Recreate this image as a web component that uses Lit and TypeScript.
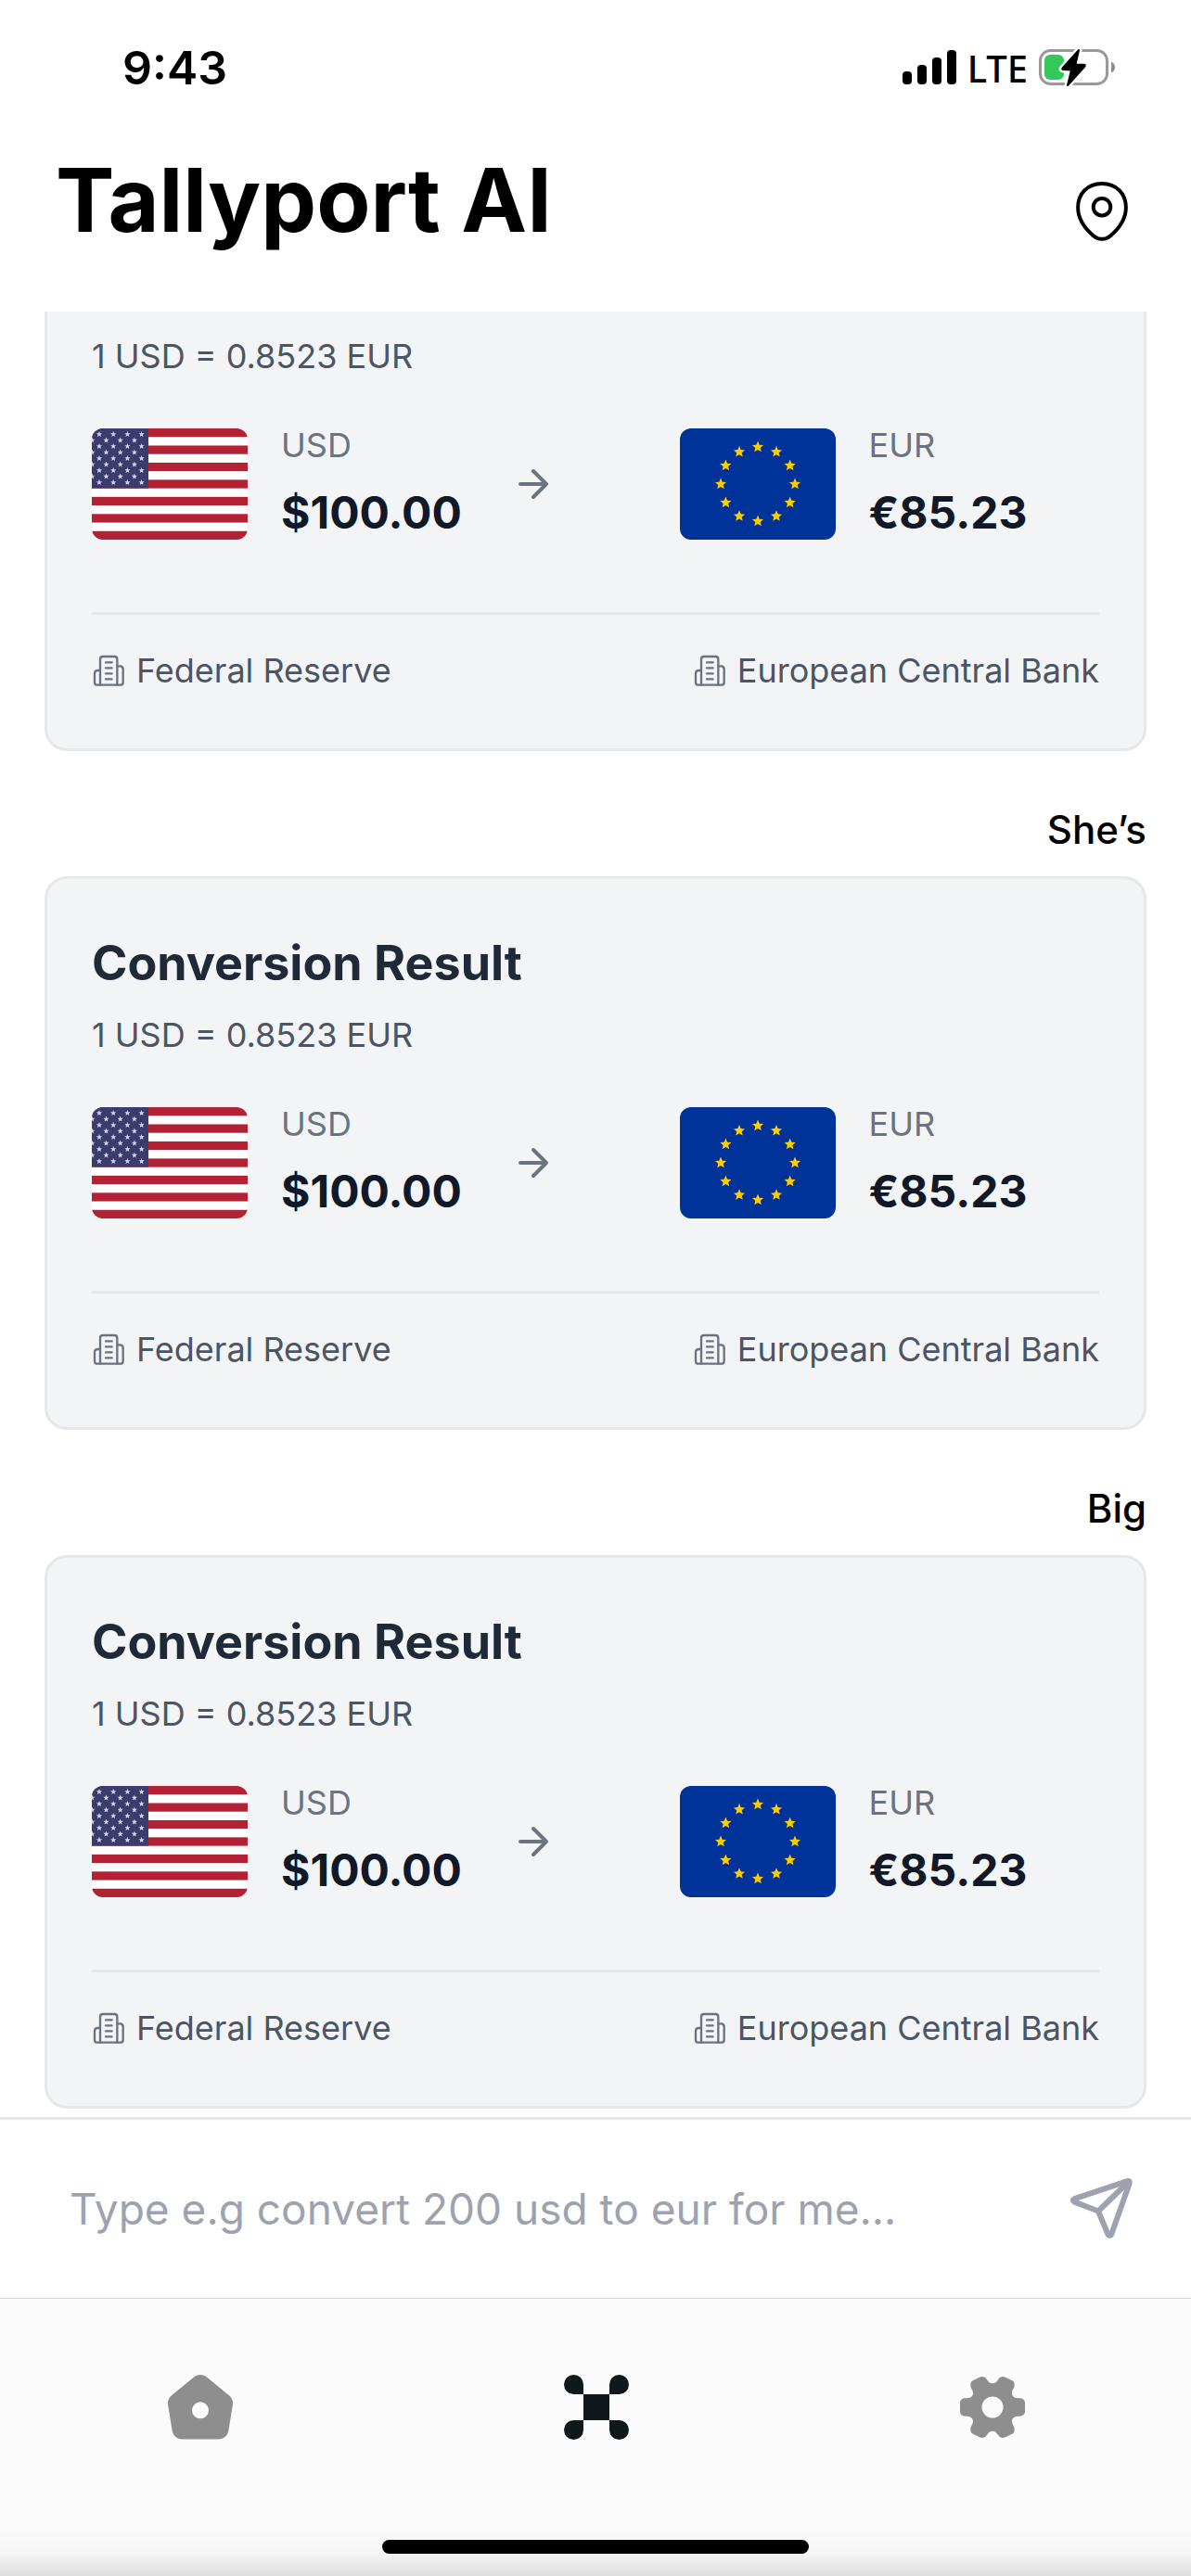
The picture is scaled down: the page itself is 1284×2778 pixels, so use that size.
import { LitElement, html, css, svg } from "lit";
import { customElement, property, state } from "lit/decorators.js";

interface Money {
  code: string;
  amount: string;
  bank: string;
}

interface Conversion {
  message?: string;
  title?: string;
  rate: string;
  from: Money;
  to: Money;
}

const usd: Money = { code: "USD", amount: "$100.00", bank: "Federal Reserve" };
const eur: Money = { code: "EUR", amount: "€85.23", bank: "European Central Bank" };
const rate = "1 USD = 0.8523 EUR";
const title = "Conversion Result";

const conversions: Conversion[] = [
  { rate, from: usd, to: eur },
  { message: "She’s", title, rate, from: usd, to: eur },
  { message: "Big", title, rate, from: usd, to: eur },
];

/** Points of a five-pointed star standing on its two lower tips. */
function starPoints(cx: number, cy: number, r: number): string {
  return Array.from({ length: 10 }, (_, i) => {
    const radius = i % 2 ? r * 0.45 : r;
    const angle = (Math.PI / 5) * i - Math.PI / 2;
    return `${(cx + radius * Math.cos(angle)).toFixed(2)},${(cy + radius * Math.sin(angle)).toFixed(2)}`;
  }).join(" ");
}

const usFlag = () => {
  const h = 120 / 13;
  const stars = [];
  for (let row = 0; row < 9; row++) {
    for (let col = 0; col < 4; col++) {
      const cx = (row % 2 ? 0.3 : 8) + col * 15.2;
      stars.push(svg`<polygon points=${starPoints(cx, 6.3 + row * 6.5, 3.2)} fill="#d4d4e4"></polygon>`);
    }
  }
  return html`<svg class="flag" viewBox="0 0 168 120" role="img" aria-label="United States flag">
    <rect width="168" height="120" fill="#fff"></rect>
    ${[0, 2, 4, 6, 8, 10, 12].map((i) => svg`<rect y=${i * h} width="168" height=${h} fill="#b22234"></rect>`)}
    <rect width="61" height="64.6" fill="#3c3b6e"></rect>
    ${stars}
  </svg>`;
};

const euFlag = () => html`<svg class="flag" viewBox="0 0 168 120" role="img" aria-label="European Union flag">
  <rect width="168" height="120" fill="#039"></rect>
  ${Array.from({ length: 12 }, (_, i) => {
    const a = (Math.PI / 6) * i;
    return svg`<polygon points=${starPoints(84 + 40 * Math.cos(a), 60 + 40 * Math.sin(a), 6.4)} fill="#fc0"></polygon>`;
  })}
</svg>`;

const buildingIcon = html`<svg class="bank-icon" viewBox="27 44 108 108" fill="none" stroke="#6b7280" stroke-width="7" stroke-linecap="round" stroke-linejoin="round" aria-hidden="true">
  <path d="M54 145V62Q54 53 63 53H100Q109 53 109 62V145"></path>
  <path d="M54 98H46Q36 98 36 108V136Q36 145 45 145H119Q128 145 128 136V94Q128 84 118 84H109"></path>
  <path d="M72 72H92M72 90H92M72 108H92M72 126H92"></path>
</svg>`;

@customElement("conversion-card")
export class ConversionCard extends LitElement {
  @property({ attribute: false }) conversion!: Conversion;

  static styles = css`
    :host {
      display: block;
      box-sizing: border-box;
      padding: 48px;
      border: 3px solid #e5e7eb;
      border-radius: 24px;
      background: #f3f4f6;
    }
    .title {
      margin: 0;
      font-size: 52px;
      line-height: 86px;
      font-weight: 700;
      color: #1f2937;
    }
    .rate {
      margin: 10px 0 48px;
      font-size: 36px;
      line-height: 48px;
      color: #4b5563;
    }
    .exchange {
      display: grid;
      grid-template-columns: 5fr 2fr 5fr;
      align-items: center;
    }
    .side {
      display: flex;
      align-items: center;
      gap: 36px;
    }
    .flag {
      flex: none;
      width: 168px;
      height: 120px;
      border-radius: 12px;
    }
    .figures {
      display: grid;
      gap: 14px;
    }
    .code {
      font-size: 36px;
      line-height: 48px;
      color: #6b7280;
    }
    .amount {
      font-size: 48px;
      line-height: 70px;
      font-weight: 700;
      color: #111827;
    }
    .arrow {
      width: 48px;
      height: 48px;
    }
    .banks {
      display: flex;
      justify-content: space-between;
      margin: 72px 0 12px;
      padding-top: 36px;
      border-top: 3px solid #e5e7eb;
    }
    .bank {
      display: flex;
      align-items: center;
      gap: 12px;
      font-size: 36px;
      line-height: 48px;
      color: #4b5563;
    }
    .bank-icon {
      width: 36px;
      height: 36px;
    }
  `;

  private side(money: Money) {
    return html`<div class="side">
      ${money.code === "USD" ? usFlag() : euFlag()}
      <div class="figures">
        <span class="code">${money.code}</span>
        <span class="amount">${money.amount}</span>
      </div>
    </div>`;
  }

  render() {
    const { title, rate, from, to } = this.conversion;
    return html`
      ${title ? html`<h2 class="title">${title}</h2>` : null}
      <p class="rate">${rate}</p>
      <div class="exchange">
        ${this.side(from)}
        <svg class="arrow" viewBox="0 0 48 48" fill="none" stroke="#6b7280" stroke-width="4" stroke-linecap="round" stroke-linejoin="round" aria-hidden="true">
          <path d="M9 24H37M23 10L37 24L23 38"></path>
        </svg>
        ${this.side(to)}
      </div>
      <div class="banks">
        <span class="bank">${buildingIcon}${from.bank}</span>
        <span class="bank">${buildingIcon}${to.bank}</span>
      </div>
    `;
  }
}

@customElement("app-root")
export class AppRoot extends LitElement {
  @state() private draft = "";

  static styles = css`
    :host {
      display: flex;
      flex-direction: column;
      height: 100vh;
      overflow: hidden;
      background: #fff;
      color: #000;
      font-family: Inter, "Liberation Sans", sans-serif;
    }
    button,
    input {
      margin: 0;
      padding: 0;
      border: 0;
      background: none;
      font: inherit;
      color: inherit;
    }
    svg {
      display: block;
    }
    .status {
      flex: none;
      display: flex;
      align-items: center;
      gap: 12px;
      height: 146px;
      padding: 0 82px 0 132px;
    }
    .time {
      margin-right: auto;
      font-size: 50px;
      font-weight: 600;
    }
    .network {
      font-family: "Noto Sans", sans-serif;
      font-size: 40px;
      font-weight: 500;
    }
    .header {
      flex: none;
      display: flex;
      align-items: flex-end;
      justify-content: space-between;
      padding: 10px 68px 60px 60px;
    }
    .heading {
      margin: 0;
      font-size: 95px;
      line-height: 120px;
      font-weight: 700;
    }
    .pin {
      padding: 16px 0;
    }
    .thread {
      flex: 1;
      min-height: 0;
      overflow: hidden;
      display: flex;
      flex-direction: column;
      justify-content: flex-end;
      padding: 0 48px 9px;
    }
    .message {
      margin: 53px 0 19px;
      font-size: 42px;
      line-height: 63px;
      font-weight: 500;
      text-align: right;
    }
    .composer {
      flex: none;
      display: flex;
      align-items: center;
      gap: 48px;
      height: 192px;
      padding: 0 60px 0 75px;
      border-top: 3px solid #e5e7eb;
    }
    .field {
      flex: 1;
      min-width: 0;
      height: 96px;
      font-size: 46px;
      outline: none;
    }
    .field::placeholder {
      color: #9ca3af;
      opacity: 1;
    }
    .tabbar {
      flex: none;
      padding: 82px 0 24px;
      border-top: 1px solid #d4d4d4;
      background: linear-gradient(#fbfbfb 82%, #f5f5f5 92%, #dedede);
    }
    .tabs {
      display: grid;
      grid-template-columns: repeat(3, 1fr);
      justify-items: center;
      padding-left: 2px;
    }
    .indicator {
      width: 460px;
      height: 15px;
      margin: 108px auto 0;
      border-radius: 8px;
      background: #000;
    }
  `;

  private onInput(event: Event) {
    this.draft = (event.target as HTMLInputElement).value;
  }

  render() {
    return html`
      <div class="status">
        <span class="time">9:43</span>
        <svg width="58" height="38" viewBox="0 0 58 38" role="img" aria-label="Signal strength">
          <rect y="23" width="10" height="14" rx="4"></rect>
          <rect x="16" y="16" width="10" height="21" rx="4"></rect>
          <rect x="32" y="8" width="10" height="29" rx="4"></rect>
          <rect x="48" y="0" width="10" height="37" rx="4"></rect>
        </svg>
        <span class="network">LTE</span>
        <svg width="82" height="42" viewBox="0 0 82 42" role="img" aria-label="Battery charging">
          <rect x="1.5" y="2.5" width="72" height="36" rx="11" fill="none" stroke="#999" stroke-width="3"></rect>
          <path d="M78 14.5Q82 16.5 82 20.5T78 26.5Z" fill="#8c8c8c"></path>
          <rect x="6" y="7" width="21" height="27" rx="6" fill="#34c759"></rect>
          <path d="M43 2L25.5 21.5Q24.5 23 26.5 23L35 23.5L31 40L49.5 19.5Q50.5 18 48.5 17.8L39.5 17.5Z" fill="#000" stroke="#fff" stroke-width="7" stroke-linejoin="round"></path>
          <path d="M43 2L25.5 21.5Q24.5 23 26.5 23L35 23.5L31 40L49.5 19.5Q50.5 18 48.5 17.8L39.5 17.5Z" fill="#000" stroke="#000" stroke-width="2" stroke-linejoin="round"></path>
        </svg>
      </div>

      <header class="header">
        <h1 class="heading">Tallyport AI</h1>
        <button class="pin" aria-label="Location">
          <svg width="56" height="64" viewBox="600 467 168 193" fill="none" stroke="#000" stroke-width="12">
            <path d="M684 473C730 473 762 505 762 551C762 583 742 617 712 643C696 657 672 657 656 643C626 617 606 583 606 551C606 505 638 473 684 473Z"></path>
            <circle cx="684" cy="549" r="28"></circle>
          </svg>
        </button>
      </header>

      <main class="thread">
        ${conversions.map(
          (c) => html`
            ${c.message ? html`<p class="message">${c.message}</p>` : null}
            <conversion-card .conversion=${c}></conversion-card>
          `
        )}
      </main>

      <form class="composer" @submit=${(e: Event) => e.preventDefault()}>
        <input
          class="field"
          type="text"
          aria-label="Message"
          placeholder="Type e.g convert 200 usd to eur for me..."
          .value=${this.draft}
          @input=${this.onInput}
        />
        <button aria-label="Send">
          <svg width="72" height="72" viewBox="0 0 72 72" fill="none" stroke="#9ca3af" stroke-width="6" stroke-linejoin="round" stroke-linecap="round">
            <path d="M63.5 6.2L6.5 25.2Q3.2 26.8 6.5 28.6L32 38.5L42.5 63.6Q44.4 66.6 46.2 63.6L65.8 8.2Q66.2 5.4 63.5 6.2Z"></path>
            <path d="M32.5 38L64 7.5"></path>
          </svg>
        </button>
      </form>

      <nav class="tabbar">
        <div class="tabs">
          <button aria-label="Home">
            <svg width="70" height="70" viewBox="0 0 70 70" fill="#8e8e8e">
              <path fill-rule="evenodd" d="M27.5 3C32 -1 38 -1 42.5 3L65.7 22C69 25 70.4 28 70 32L65.4 60C64.5 66 60 69.5 54.5 69.5H15.5C10 69.5 5.5 66 4.6 60L0 32C-.4 28 1 25 4.3 22ZM35 29.3A9 9 0 1 0 35 47.3A9 9 0 1 0 35 29.3Z"></path>
            </svg>
          </button>
          <button aria-label="Assistant" aria-current="page">
            <svg width="70" height="70" viewBox="0 0 70 70" fill="#11181c">
              <rect x="21" y="21" width="28" height="28"></rect>
              <path d="M21 21H10.5A10.5 10.5 0 1 1 21 10.5Z"></path>
              <path d="M49 21V10.5A10.5 10.5 0 1 1 59.5 21Z"></path>
              <path d="M21 49V59.5A10.5 10.5 0 1 1 10.5 49Z"></path>
              <path d="M49 49H59.5A10.5 10.5 0 1 1 49 59.5Z"></path>
            </svg>
          </button>
          <button aria-label="Settings">
            <svg width="70" height="70" viewBox="168 693 210 210" fill="#8e8e8e">
              <path fill-rule="evenodd" d="M378 785C378 775 371 769 360 769C345 769 336 764 336 752C336 741 344 738 344 726C344 717 341 714 335 711L315 701C305 697 298 699 292 707C286 716 282 721 273 721C264 721 260 716 254 707C248 699 241 697 231 701L211 711C205 714 202 717 202 726C202 738 210 741 210 752C210 764 201 769 186 769C175 769 168 775 168 785V811C168 821 175 827 186 827C201 827 210 832 210 844C210 855 202 858 202 870C202 879 205 882 211 885L231 895C241 899 248 897 254 889C260 880 264 875 273 875C282 875 286 880 292 889C298 897 305 899 315 895L335 885C341 882 344 879 344 870C344 858 336 855 336 844C336 832 345 827 360 827C371 827 378 821 378 811ZM273 763.5A34.5 34.5 0 1 0 273 832.5A34.5 34.5 0 1 0 273 763.5Z"></path>
            </svg>
          </button>
        </div>
        <div class="indicator"></div>
      </nav>
    `;
  }
}
